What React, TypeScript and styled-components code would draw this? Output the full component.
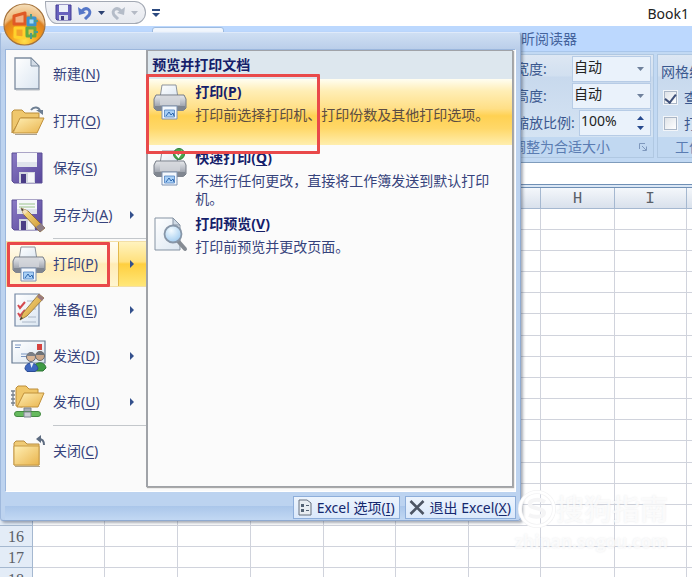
import React from "react";
import styled, { createGlobalStyle, css } from "styled-components";

const Global = createGlobalStyle`
  * { box-sizing: border-box; }
  html, body, #root { height: 100%; margin: 0; }
  body { overflow: hidden; background: #fff; }
  body, button, input, select {
    font-family: "Noto Sans", "Noto Sans CJK SC", sans-serif;
    font-size: 14px;
    line-height: 20px;
    color: #15286e;
  }
  button, input, select { margin: 0; padding: 0; border: 0; background: none; border-radius: 0; }
  svg { flex: none; }
  u { text-underline-offset: 2px; }
`;

/* ---------- application window ---------- */

const Window = styled.div`
  position: relative;
  min-height: 100vh;
  overflow: hidden;
`;

const TitleBar = styled.header`
  display: flex;
  align-items: flex-start;
  height: 26px;
  padding: 1px 3px 0 45px;
`;

const QuickAccess = styled.div`
  display: flex;
  align-items: center;
  width: 101px;
  height: 23px;
  padding-left: 9px;
  gap: 6px;
  border: 1px solid #a3a9b4;
  border-radius: 0 12px 12px 0 / 0 12px 12px 0;
  border-bottom-left-radius: 12px 22px;
  background: linear-gradient(#f3f4f7, #e6e9ef);
`;

const ToolButton = styled.button`
  display: flex;
  align-items: center;
  height: 20px;
`;

const MoreButton = styled(ToolButton)`
  margin-left: 6px;
  height: 24px;
`;

const DocTitle = styled.h1`
  flex: 1;
  margin: 0;
  padding-top: 3px;
  text-align: right;
  font-weight: 400;
  font-size: 14px;
  color: #222;
`;

const TabRow = styled.nav`
  display: flex;
  height: 26px;
  padding: 1px 0 0 152px;
  background: #bcd8fe;
  border-bottom: 1px solid #a9c6ea;
  white-space: nowrap;
`;

const ActiveTab = styled.div`
  width: 72px;
  border: 1px solid #9dbbe0;
  border-radius: 3px 3px 0 0;
  background: #f1f6fd;
`;

const Tab = styled.button`
  margin-left: 297px;
  color: #44639c;
`;

const Ribbon = styled.div`
  display: flex;
  height: 111px;
  padding: 2px 0 4px;
  background: #c2d9f3;
  border-bottom: 1px solid #7f9cbc;
`;

const Group = styled.section<{ $width?: number }>`
  flex: ${(p) => (p.$width ? `0 0 ${p.$width}px` : "1 0 auto")};
  display: flex;
  flex-direction: column;
  margin-right: 3px;
  border: 1px solid #b0c8e2;
  background: linear-gradient(#dde7f3, #d2e0f0 20%, #c8d9ed 22%, #d9e7f5);
`;

const GroupBody = styled.div`
  flex: 1;
  display: flex;
  flex-direction: column;
  gap: 1px;
  padding: 1px 2px 0 6px;
`;

const GroupLabel = styled.div<{ $indent: number }>`
  display: flex;
  align-items: center;
  justify-content: space-between;
  height: 20px;
  padding: 0 6px 0 ${(p) => p.$indent}px;
  background: #c1d8f1;
  color: #5a7cb2;
  white-space: nowrap;
`;

const Field = styled.label`
  display: flex;
  align-items: center;
  justify-content: space-between;
  height: 26px;
  white-space: nowrap;
  color: #3a588f;
`;

const Combo = styled.span<{ $width: number }>`
  display: flex;
  align-items: center;
  width: ${(p) => p.$width}px;
  height: 26px;
  padding: 0 6px 0 1px;
  border: 1px solid #b7cce6;
  background: #eaf2fb;

  select, input {
    flex: 1;
    min-width: 0;
    height: 20px;
    margin-bottom: 4px;
    appearance: none;
    color: #222;
    outline: none;
  }
`;

const Spinner = styled.span`
  display: flex;
  flex-direction: column;
  gap: 6px;

  button { display: flex; }
`;

const SheetOption = styled.label`
  display: flex;
  align-items: center;
  gap: 7px;
  height: 25px;
  white-space: nowrap;
  color: #3a588f;

  input {
    appearance: none;
    flex: none;
    display: grid;
    place-items: center;
    width: 13px;
    height: 13px;
    border: 1px solid #aab6c6;
    background: linear-gradient(135deg, #dfe3e8, #fff);
    box-shadow: 0 0 0 1px #f2f5f9;
  }
  input:checked::after {
    content: "";
    width: 5px;
    height: 9px;
    border: solid #3e4f78;
    border-width: 0 2px 2px 0;
    transform: rotate(38deg);
  }
`;

const OptionTitle = styled.div`
  height: 28px;
  margin-left: -3px;
  padding-top: 6px;
  white-space: nowrap;
  color: #3a588f;
`;

const FormulaBar = styled.div`
  height: 25px;
  border-bottom: 1px solid #6f8fb5;
  background: linear-gradient(#fff 21px, #6f8fb5 21px, #6f8fb5 22px, #dbe7f5 22px);
`;

/* ---------- worksheet ---------- */

const Sheet = styled.table`
  table-layout: fixed;
  width: 760px;
  border-collapse: separate;
  border-spacing: 0;

  col:first-child { width: 33px; }
  col:nth-child(even) { width: 72px; }
  col:nth-child(odd):not(:first-child) { width: 73px; }

  th, td {
    height: 21px;
    padding: 0;
    border: solid #d0d3dc;
    border-width: 0 1px 1px 0;
  }
  tbody tr:nth-child(6n) > * { height: 22px; }
  th {
    padding-top: 2px;
    font: 400 16px/18px "Liberation Serif", serif;
    color: #5a6068;
    background: #e3ecf7;
    border-color: #a5b8d0;
  }
  thead th {
    font-family: "Liberation Mono", monospace;
    background: linear-gradient(#f4f7fb, #d9e1ec);
  }
`;

/* ---------- office menu ---------- */

const OfficeButton = styled.button`
  position: absolute;
  z-index: 3;
  left: 3px;
  top: 3px;
  display: flex;
`;

const Menu = styled.div`
  position: absolute;
  z-index: 2;
  left: 0;
  top: 32px;
  width: 521px;
  padding: 16px 4px 0;
  border: 1px solid #8faad0;
  border-top-color: #dfeafa;
  border-left-color: #9fb9dd;
  border-radius: 3px;
  background: linear-gradient(#cfdff3, #b9cde9 17px, #bdd3ef 60px);
  box-shadow: 2px 2px 3px rgba(60, 70, 90, 0.45);
`;

const MenuBody = styled.div`
  display: flex;
  height: 443px;
  border: 1px solid #9bb6dc;
  border-right: 1px solid #fff;
  border-bottom-color: #fff;
  background: #fafafa;
`;

const Commands = styled.div`
  flex: 0 0 139px;
  display: flex;
  flex-direction: column;
`;

const Divider = styled.hr`
  flex: none;
  width: 93px;
  height: 1px;
  margin: 0 0 2px auto;
  border: 0;
  background: #c3c7cb;
`;

const Command = styled.button<{ $active?: boolean }>`
  flex: none;
  display: flex;
  align-items: center;
  height: 47px;
  padding-left: 5px;
  gap: 6px;
  text-align: left;
  color: #36437c;
  white-space: nowrap;

  hr ~ & { height: 46px; }

  ${(p) =>
    p.$active &&
    css`
      border: 1px solid #f3dfa6;
      border-right: 0;
      padding-left: 4px;
      background: linear-gradient(#fffdf3, #fff3cf 45%, #ffebb5 50%, #fff5cf);
    `}
`;

const CommandText = styled.span`
  flex: 1;
`;

const Expand = styled.span<{ $active?: boolean }>`
  align-self: stretch;
  display: flex;
  align-items: center;
  width: 28px;
  padding-left: 12px;
  ${(p) =>
    p.$active &&
    css`
      padding-left: 11px;
      border-left: 1px solid #e3b94c;
      background: linear-gradient(#fff3bf, #ffe07c 45%, #ffcf3f 50%, #ffe779);
    `}
`;

const Panel = styled.div`
  flex: 1;
  min-width: 0;
  margin: 0 2px 4px 0;
  border: 1px solid #a0a3a8;
  border-left-width: 2px;
  box-shadow: 1px 1px 1px #a9a9a9;
  background: #fbfbfb;
`;

const PanelTitle = styled.h2`
  height: 28px;
  margin: 0;
  padding: 4px;
  font-size: 14px;
  font-weight: 700;
  line-height: 20px;
  background: #dde7ee;
  color: #15206a;
`;

const Choice = styled.button<{ $active?: boolean }>`
  display: flex;
  align-items: flex-start;
  gap: 7px;
  width: 100%;
  min-height: 66px;
  padding: 3px 12px 0 4px;
  text-align: left;
  color: #36437c;
  ${(p) =>
    p.$active &&
    css`
      color: #5c4d43;
      background: linear-gradient(#fffef2, #ffeeb6 18%, #ffdf86 45%, #ffd152 56%, #ffd869 75%, #ffeeae);
    `}
`;

const ChoiceText = styled.span`
  display: flex;
  flex-direction: column;
  gap: 4px;
  line-height: 18px;

  strong { line-height: 20px; color: #15206a; }
`;

const Footer = styled.div`
  display: flex;
  justify-content: flex-end;
  gap: 5px;
  height: 28px;
  padding-top: 4px;
  background: linear-gradient(#bcd3f0 14px, #aac6ea 14px, #c2d8f3);
`;

const FooterButton = styled.button`
  display: flex;
  align-items: center;
  gap: 5px;
  height: 23px;
  padding: 0 4px 0 3px;
  border: 1px solid #8eaeda;
  background: linear-gradient(#edf4fd, #dbe9fb);
  white-space: nowrap;
`;

const Mark = styled.div<{ $x: number; $y: number; $w: number; $h: number }>`
  position: absolute;
  z-index: 4;
  left: ${(p) => p.$x}px;
  top: ${(p) => p.$y}px;
  width: ${(p) => p.$w}px;
  height: ${(p) => p.$h}px;
  border: 3px solid #e9494a;
  border-radius: 1px;
  pointer-events: none;
`;

const Watermark = styled.div`
  position: absolute;
  z-index: 4;
  right: 24px;
  top: 489px;
  display: flex;
  flex-direction: column;
  align-items: flex-end;
  color: rgba(255, 255, 255, 0.75);
  text-shadow: 0 0 2px rgba(120, 125, 135, 0.16);
  pointer-events: none;
`;

const Brand = styled.div`
  display: flex;
  align-items: center;
  height: 40px;
  font-size: 28px;
  font-weight: 500;
  line-height: 40px;
`;

const Site = styled.div`
  font: 700 17px/26px "Open Sans", sans-serif;
`;

/* ---------- drawings ---------- */

const Icon = ({ children }: { children: React.ReactNode }) => (
  <svg width="36" height="40" viewBox="0 0 36 40" fill="none" aria-hidden="true">
    {children}
  </svg>
);

const Defs = () => (
  <svg width="0" height="0" aria-hidden="true" display="block">
    <defs>
      <linearGradient id="paper" x1="0" y1="0" x2="1" y2="1">
        <stop offset="0" stopColor="#fff" />
        <stop offset="1" stopColor="#dbe6f1" />
      </linearGradient>
      <linearGradient id="folder" x1="0" y1="0" x2="1" y2="1">
        <stop offset="0" stopColor="#ffefb4" />
        <stop offset="1" stopColor="#e9b44d" />
      </linearGradient>
      <linearGradient id="steel" x1="0" y1="0" x2="0" y2="1">
        <stop offset="0" stopColor="#e9ebee" />
        <stop offset="0.5" stopColor="#b9bdc5" />
        <stop offset="1" stopColor="#858b96" />
      </linearGradient>
      <linearGradient id="disk" x1="0" y1="0" x2="1" y2="1">
        <stop offset="0" stopColor="#8b7bc4" />
        <stop offset="1" stopColor="#57469b" />
      </linearGradient>
      <linearGradient id="pencil" x1="0" y1="0" x2="1" y2="1">
        <stop offset="0" stopColor="#fde58d" />
        <stop offset="1" stopColor="#c98d26" />
      </linearGradient>
      <radialGradient id="orb" cx="0.5" cy="0.9" r="0.9">
        <stop offset="0" stopColor="#ffdf4c" />
        <stop offset="0.4" stopColor="#f49a16" />
        <stop offset="0.65" stopColor="#dd8123" />
        <stop offset="0.72" stopColor="#eebb7c" />
        <stop offset="1" stopColor="#f5dfbb" />
      </radialGradient>
      <radialGradient id="lens" cx="0.4" cy="0.3" r="0.7">
        <stop offset="0" stopColor="#f4fbff" />
        <stop offset="1" stopColor="#a3cdf0" />
      </radialGradient>
    </defs>
  </svg>
);

const NewIcon = () => (
  <Icon>
    <path d="M4 4h16l8 8v23H4z" fill="url(#paper)" stroke="#7d8da0" strokeWidth="1.3" />
    <path d="M20 4v8h8z" fill="#d3dce6" stroke="#7d8da0" />
    <path d="M5 36h23.5V14" stroke="#b9bec4" />
  </Icon>
);

const OpenIcon = () => (
  <Icon>
    <path d="M1 32V11l2-2h8l3 3h14v5H10z" fill="#efc76d" stroke="#b98d3d" />
    <path d="M2 32l7-15h24l-7 15z" fill="url(#folder)" stroke="#c0903a" />
    <path d="M20 9c3-4 8-3 9 1" stroke="#6e7f93" strokeWidth="2" />
    <path d="M25 9h7v5z" fill="#6e7f93" />
    <path d="M4 33.500h22" stroke="#a9a193" />
  </Icon>
);

const Floppy = () => (
  <>
    <path d="M1 5h30v30H3l-2-2z" fill="url(#disk)" stroke="#5b4e95" />
    <path d="M6 5h20v14H6z" fill="#f6f7fa" />
    <path d="M6 14h20v5H6z" fill="#dfe3ec" />
    <path d="M8 24h16v11H8z" fill="#d3d7e0" />
    <path d="M10 26h5v9h-5z" fill="#4a3d86" />
    <path d="M17 25h6v9h-6z" fill="#f5f6fa" />
  </>
);

const SaveIcon = () => (
  <Icon>
    <Floppy />
  </Icon>
);

const SaveAsIcon = () => (
  <Icon>
    <Floppy />
    <path d="M8 9h16M8 12h16" stroke="#9ac48c" strokeWidth="1.2" />
    <path d="M10 13l3 7 16 17 5-4L17 16z" fill="url(#pencil)" stroke="#85622a" strokeWidth="0.8" />
    <path d="M10 13l3 7 4-4z" fill="#f4dfb9" />
    <path d="M10 13l1 3 2-1z" fill="#333" />
    <path d="M25 32l4 5 5-4-4-5z" fill="#8d7d86" />
  </Icon>
);

const PrinterShape = () => (
  <>
    <path d="M10 3h14l2 13H8z" fill="url(#paper)" stroke="#8c939c" />
    <path d="M4 13h28l2 4v9l-2 2H4l-2-2v-9z" fill="url(#steel)" stroke="#747b85" />
    <path d="M8 14h20v9H8z" fill="#d3d6db" opacity="0.8" />
    <path d="M3 24h30v3l-2 2H5l-2-2z" fill="#808690" />
    <path d="M10 24h15v13H10z" fill="#f4f8fd" stroke="#7e93b2" />
    <path d="M12.500 28h10v7h-10z" fill="#a9d0f6" stroke="#4f81c1" strokeWidth="0.8" />
    <path d="M14 34l3-4 2 3 2-2 1 3" stroke="#2e66ad" />
  </>
);

const PrintIcon = () => (
  <Icon>
    <PrinterShape />
  </Icon>
);

const QuickPrintIcon = () => (
  <Icon>
    <PrinterShape />
    <circle cx="27" cy="6" r="5.500" fill="#49a64d" stroke="#2e7d38" />
    <path d="M24 6l2.500 3 4-6" stroke="#fff" strokeWidth="1.8" />
  </Icon>
);

const PreviewIcon = () => (
  <Icon>
    <path d="M3 4h18l7 7v25H3z" fill="url(#paper)" stroke="#8593a3" />
    <path d="M21 4v7h7z" fill="#cfd9e4" stroke="#8593a3" />
    <path d="M26 27l7 8" stroke="#858b93" strokeWidth="4" strokeLinecap="round" />
    <circle cx="21" cy="20" r="8.500" fill="url(#lens)" stroke="#8796a8" strokeWidth="1.8" />
  </Icon>
);

const PrepareIcon = () => (
  <Icon>
    <path d="M4 4h24v32H4z" fill="url(#paper)" stroke="#7387a4" strokeWidth="1.2" />
    <path d="M16 11h9M18 19h7M17 27h8M11 32h14" stroke="#aab6c6" />
    <path d="M7 15l2 3 5-6M7 23l2 3 5-6" stroke="#d44a50" strokeWidth="2" />
    <path d="M9 30l3-7L28 4l5 4-17 18z" fill="url(#pencil)" stroke="#8a6d36" strokeWidth="0.8" />
    <path d="M26 7l2-3 5 4-2 3z" fill="#9a7a7e" />
    <path d="M9 30l1-3 2 1z" fill="#333" />
  </Icon>
);

const SendIcon = () => (
  <Icon>
    <path d="M1 5h33v22H1z" fill="url(#paper)" stroke="#677a92" strokeWidth="1.2" />
    <path d="M4 9h6M4 11.500h5M10 18h10M10 20.500h8" stroke="#7b96c0" />
    <path d="M26 8h5v6h-5z" fill="#d6423f" />
    <circle cx="29" cy="20" r="4.500" fill="#c9a68a" stroke="#6e6a68" />
    <path d="M22 33c0-7 12-9 13-1l-3 3h-8z" fill="#3f9b45" stroke="#2f7437" />
    <circle cx="20" cy="21" r="4.500" fill="#d8b698" stroke="#676b76" />
    <path d="M16 20c0-5 8-5 8.500 0z" fill="#7b7f86" />
    <path d="M25 19c0-5 8-5 8.500 0z" fill="#6d7177" />
    <path d="M14 33c0-8 12-8 13 0l-3 2.500h-8z" fill="#3f68c0" stroke="#2c4d96" />
    <path d="M19 27l1.500 5 2-5z" fill="#e6eefb" />
  </Icon>
);

const PublishIcon = () => (
  <Icon>
    <path d="M5 24V6l2-2h8l3 3h9v5L11 25z" fill="#f0c76a" stroke="#bd8e3b" />
    <path d="M6 25l7-14h20l-6 14z" fill="url(#folder)" stroke="#c0903a" />
    <path d="M0 9h4M0 13h4M0 17h4M0 21h4M2 9v15" stroke="#77808c" strokeWidth="1.3" />
    <path d="M13 26h7v7h-7z" fill="#a9afb8" stroke="#7d848e" />
    <path d="M6 29.500h21a2.500 2.500 0 0 1 0 5H6a2.500 2.500 0 0 1 0-5z" fill="#66ba5e" stroke="#438a42" />
    <path d="M13 30h7v5h-7z" fill="#c9cdd3" stroke="#7d848e" />
  </Icon>
);

const CloseIcon = () => (
  <Icon>
    <path d="M3 34V12l2-2h8l3 3h12v21z" fill="#f0cb76" stroke="#b88d40" />
    <path d="M3 34V15h25v19z" fill="url(#folder)" stroke="#c89b47" />
    <path d="M4 35.500h25" stroke="#b0a691" />
    <path d="M33 14c0-4-2-6-5-6" stroke="#5d6b80" strokeWidth="2" />
    <path d="M25 8l5-4v8z" fill="#5d6b80" />
  </Icon>
);

const Orb = () => (
  <svg width="43" height="43" viewBox="0 0 43 43" fill="none" aria-hidden="true">
    <circle cx="21.500" cy="21.500" r="20.500" fill="url(#orb)" stroke="#a5733c" strokeWidth="1.2" />
    <g strokeWidth="3" strokeLinejoin="round">
      <path d="M11 13l11-3v11H11z" stroke="#e05a26" fill="#f3b183" />
      <path d="M25 15h7v7h-7z" stroke="#3b93cf" fill="#a9dcf2" />
      <path d="M12 25h9v10l-9-1z" stroke="#ffd22c" fill="#f3a229" />
      <path d="M24 25h8v8h-8z" stroke="#62ab42" fill="#e0c54c" />
    </g>
    <path d="M28 11v5M31 18h4M28 30v6M31 29h4" stroke="#4d9c8c" strokeWidth="2" />
  </svg>
);

const SmallSave = () => (
  <svg width="17" height="17" viewBox="0 0 17 17" aria-hidden="true">
    <path d="M1 1h15v15H2l-1-1z" fill="#6861bd" stroke="#453f94" />
    <path d="M4 1h9v7H4z" fill="#eef1fa" />
    <path d="M4 11h9v5H4z" fill="#d8dcea" />
    <path d="M6 12h3v4H6z" fill="#3f3a86" />
  </svg>
);

const Curve = ({ redo }: { redo?: boolean }) => (
  <svg width="14" height="15" viewBox="0 0 14 15" fill="none" aria-hidden="true">
    <g transform={redo ? "translate(14 0) scale(-1 1)" : undefined}>
      <path d="M4 6c4-5 10-1 7 4l-4 4" stroke={redo ? "#b4bcc8" : "#5577c8"} strokeWidth="3" />
      <path d="M0 2l1 8 7-2z" fill={redo ? "#b4bcc8" : "#5577c8"} />
    </g>
  </svg>
);

const Down = ({ color = "#3c5684", up }: { color?: string; up?: boolean }) => (
  <svg width="7" height="4" viewBox="0 0 7 4" aria-hidden="true">
    <path d={up ? "M0 4h7L3.500 0z" : "M0 0h7L3.500 4z"} fill={color} />
  </svg>
);

const Right = () => (
  <svg width="4" height="8" viewBox="0 0 4 8" aria-hidden="true">
    <path d="M0 0l4 4-4 4z" fill="#33508c" />
  </svg>
);

/* ---------- content ---------- */

const columns = ["", "", "", "", "", "", "", "H", "I", ""];
const rows = Array.from({ length: 18 }, (_, i) => (i < 15 ? "" : i + 1));

const commands = [
  { label: "新建", letter: "N", icon: <NewIcon /> },
  { label: "打开", letter: "O", icon: <OpenIcon /> },
  { label: "保存", letter: "S", icon: <SaveIcon /> },
  { label: "另存为", letter: "A", icon: <SaveAsIcon />, expands: true },
  { label: "打印", letter: "P", icon: <PrintIcon />, expands: true, active: true, divided: true },
  { label: "准备", letter: "E", icon: <PrepareIcon />, expands: true },
  { label: "发送", letter: "D", icon: <SendIcon />, expands: true },
  { label: "发布", letter: "U", icon: <PublishIcon />, expands: true },
  { label: "关闭", letter: "C", icon: <CloseIcon />, divided: true },
];

const choices = [
  { label: "打印", letter: "P", text: "打印前选择打印机、打印份数及其他打印选项。", icon: <PrintIcon />, active: true },
  { label: "快速打印", letter: "Q", text: "不进行任何更改，直接将工作簿发送到默认打印机。", icon: <QuickPrintIcon /> },
  { label: "打印预览", letter: "V", text: "打印前预览并更改页面。", icon: <PreviewIcon /> },
];

const Key = ({ letter }: { letter: string }) => (
  <>
    (<u>{letter}</u>)
  </>
);

export default function App() {
  return (
    <Window>
      <Global />
      <Defs />
      <TitleBar>
        <QuickAccess>
          <ToolButton aria-label="保存"><SmallSave /></ToolButton>
          <ToolButton aria-label="撤消"><Curve /></ToolButton>
          <Down color="#2c4272" />
          <ToolButton aria-label="恢复"><Curve redo /></ToolButton>
          <Down color="#b4bac5" />
        </QuickAccess>
        <MoreButton aria-label="自定义快速访问工具栏">
          <svg width="8" height="8" viewBox="0 0 8 8" aria-hidden="true">
            <path d="M0 0h8v2H0zM0 4h8L4 8z" fill="#2c4a80" />
          </svg>
        </MoreButton>
        <DocTitle>Book1</DocTitle>
      </TitleBar>

      <TabRow>
        <ActiveTab />
        <Tab>昕阅读器</Tab>
      </TabRow>

      <Ribbon>
        <Group $width={505} />
        <Group $width={146}>
          <GroupBody>
            <Field>
              <span>宽度:</span>
              <Combo $width={79}>
                <select aria-label="宽度"><option>自动</option></select>
                <Down color="#6f819c" />
              </Combo>
            </Field>
            <Field>
              <span>高度:</span>
              <Combo $width={79}>
                <select aria-label="高度"><option>自动</option></select>
                <Down color="#6f819c" />
              </Combo>
            </Field>
            <Field>
              <span>缩放比例:</span>
              <Combo $width={72}>
                <input aria-label="缩放比例" defaultValue="100%" />
                <Spinner>
                  <button aria-label="增加"><Down up color="#274a8e" /></button>
                  <button aria-label="减少"><Down color="#274a8e" /></button>
                </Spinner>
              </Combo>
            </Field>
          </GroupBody>
          <GroupLabel $indent={3}>
            调整为合适大小
            <svg width="8" height="8" viewBox="0 0 8 8" fill="none" aria-hidden="true">
              <path d="M.5 6V.5H6M3 3l4 4M7.500 3.500v4h-4" stroke="#7e98bd" />
            </svg>
          </GroupLabel>
        </Group>
        <Group>
          <GroupBody>
            <OptionTitle>网格线</OptionTitle>
            <SheetOption><input type="checkbox" defaultChecked />查看</SheetOption>
            <SheetOption><input type="checkbox" />打印</SheetOption>
          </GroupBody>
          <GroupLabel $indent={17}>工作表选项</GroupLabel>
        </Group>
      </Ribbon>
      <FormulaBar />

      <Sheet>
        <colgroup>
          <col />
          {columns.map((_, i) => <col key={i} />)}
        </colgroup>
        <thead>
          <tr>
            <th />
            {columns.map((c, i) => <th key={i} scope="col">{c}</th>)}
          </tr>
        </thead>
        <tbody>
          {rows.map((r, n) => (
            <tr key={n}>
              <th scope="row">{r}</th>
              {columns.map((_, i) => <td key={i} />)}
            </tr>
          ))}
        </tbody>
      </Sheet>

      <OfficeButton aria-label="Office 按钮"><Orb /></OfficeButton>

      <Menu>
        <MenuBody>
          <Commands>
            {commands.map((c) => (
              <React.Fragment key={c.letter}>
                {c.divided && <Divider />}
                <Command $active={c.active}>
                  {c.icon}
                  <CommandText>{c.label}<Key letter={c.letter} /></CommandText>
                  {c.expands && <Expand $active={c.active}><Right /></Expand>}
                </Command>
              </React.Fragment>
            ))}
          </Commands>
          <Panel>
            <PanelTitle>预览并打印文档</PanelTitle>
            {choices.map((c) => (
              <Choice key={c.letter} $active={c.active}>
                {c.icon}
                <ChoiceText>
                  <strong>{c.label}<Key letter={c.letter} /></strong>
                  <span>{c.text}</span>
                </ChoiceText>
              </Choice>
            ))}
          </Panel>
        </MenuBody>
        <Footer>
          <FooterButton>
            <svg width="15" height="17" viewBox="0 0 15 17" fill="none" aria-hidden="true">
              <path d="M2 1h8l4 3v12H2z" fill="#e8edf2" stroke="#66717e" />
              <path d="M4 5h3v3H4zM4 10h3v3H4z" fill="#536273" />
              <path d="M9 6.500h3M9 11.500h3" stroke="#536273" />
            </svg>
            <span>Excel 选项<Key letter="I" /></span>
          </FooterButton>
          <FooterButton>
            <svg width="16" height="15" viewBox="0 0 16 15" fill="none" aria-hidden="true">
              <path d="M1.500 1l13 13M14.500 1l-13 13" stroke="#4d5563" strokeWidth="2.600" />
            </svg>
            <span>退出 Excel<Key letter="X" /></span>
          </FooterButton>
        </Footer>
      </Menu>

      <Mark $x={7} $y={242} $w={103} $h={45} />
      <Mark $x={146} $y={74} $w={174} $h={80} />

      <Watermark>
        <Brand>
          <svg width="38" height="40" viewBox="0 0 38 40" fill="none" aria-hidden="true">
            <circle cx="19" cy="20" r="17" stroke="#f3f3f4" strokeWidth="4" />
            <circle cx="19" cy="20" r="17" stroke="#fff" strokeWidth="2.500" />
            <path d="M27 13c-7-4-17-2-15 3 2 4 14 3 14 8 0 4-9 5-15 2" stroke="#f5f5f6" strokeWidth="4" />
          </svg>
          搜狗指南
        </Brand>
        <Site>zhinan.sogou.com</Site>
      </Watermark>
    </Window>
  );
}
